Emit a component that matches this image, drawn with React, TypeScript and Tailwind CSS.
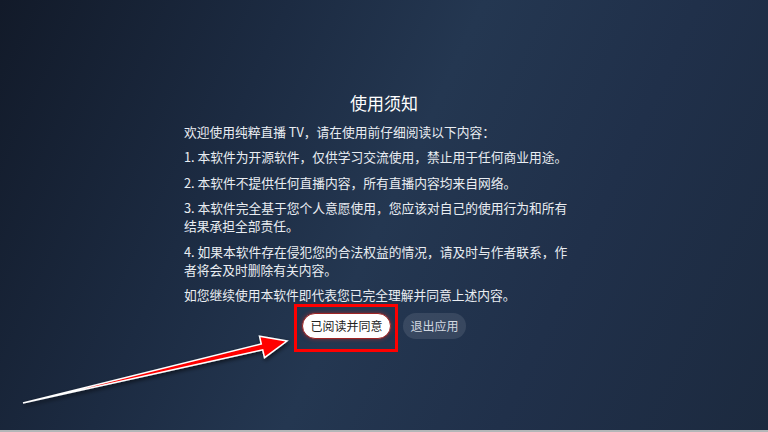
// 使用须知 — 首次启动协议弹窗（带标注箭头）
const FONT = "font-['Noto_Sans_CJK_SC','Noto_Sans',sans-serif]";

const ITEMS: string[][] = [
  ['欢迎使用纯粹直播 TV，请在使用前仔细阅读以下内容：'],
  ['1. 本软件为开源软件，仅供学习交流使用，禁止用于任何商业用途。'],
  ['2. 本软件不提供任何直播内容，所有直播内容均来自网络。'],
  ['3. 本软件完全基于您个人意愿使用，您应该对自己的使用行为和所有', '结果承担全部责任。'],
  ['4. 如果本软件存在侵犯您的合法权益的情况，请及时与作者联系，作', '者将会及时删除有关内容。'],
  ['如您继续使用本软件即代表您已完全理解并同意上述内容。'],
];

function Arrow() {
  return (
    <svg
      className="absolute inset-0 pointer-events-none"
      width="768"
      height="432"
      viewBox="0 0 768 432"
    >
      <defs>
        <filter id="sh" x="-10%" y="-10%" width="120%" height="130%">
          <feDropShadow dx="1" dy="2" stdDeviation="2" floodColor="#000" floodOpacity="0.6" />
        </filter>
      </defs>
      <polygon
        points="23,403 261.3,344 259.5,336.2 287,341 264.5,357.6 262.7,349.8"
        fill="#ff0000"
        stroke="#ffffff"
        strokeWidth="1.5"
        strokeLinejoin="miter"
        filter="url(#sh)"
      />
    </svg>
  );
}

export default function App() {
  return (
    <div
      className={`relative w-[768px] h-[432px] overflow-hidden flex flex-col bg-[linear-gradient(115deg,#121a29_0%,#1c2b42_30%,#243751_50%,#20304a_72%,#1c2a3f_100%)] ${FONT}`}
    >
      <div className="flex-1 flex flex-col items-center justify-center">
        {/* 标题 */}
        <h1 className="text-[17px] leading-[24px] text-white mb-2">使用须知</h1>

        {/* 正文 */}
        <div className="w-[400px] flex flex-col gap-[7.5px] text-[12.75px] leading-[18px] text-[#e9edf2]">
          {ITEMS.map((lines, i) => (
            <p key={i}>
              {lines.map((t, j) => (
                <span key={j} className="block whitespace-nowrap">
                  {t}
                </span>
              ))}
            </p>
          ))}
        </div>

        {/* 按钮 */}
        <div className="mt-2 flex items-center gap-3">
          <div className="relative">
            <button className="w-[89px] h-[26px] rounded-full bg-white text-[12px] text-[#222] border-[1.5px] border-[#9e2424] shadow-[0_0_4px_rgba(180,40,40,0.7)]">
              已阅读并同意
            </button>
            <div className="absolute -left-[8px] -top-[8px] w-[104px] h-[48px] border-[3px] border-[#ff0000] pointer-events-none" />
          </div>
          <button className="w-[63px] h-[26px] rounded-full bg-white/10 text-[12px] text-[#d3d9e1]">
            退出应用
          </button>
        </div>
      </div>

      <div className="h-[2px] bg-[#b4b6b8]" />
      <Arrow />
    </div>
  );
}
